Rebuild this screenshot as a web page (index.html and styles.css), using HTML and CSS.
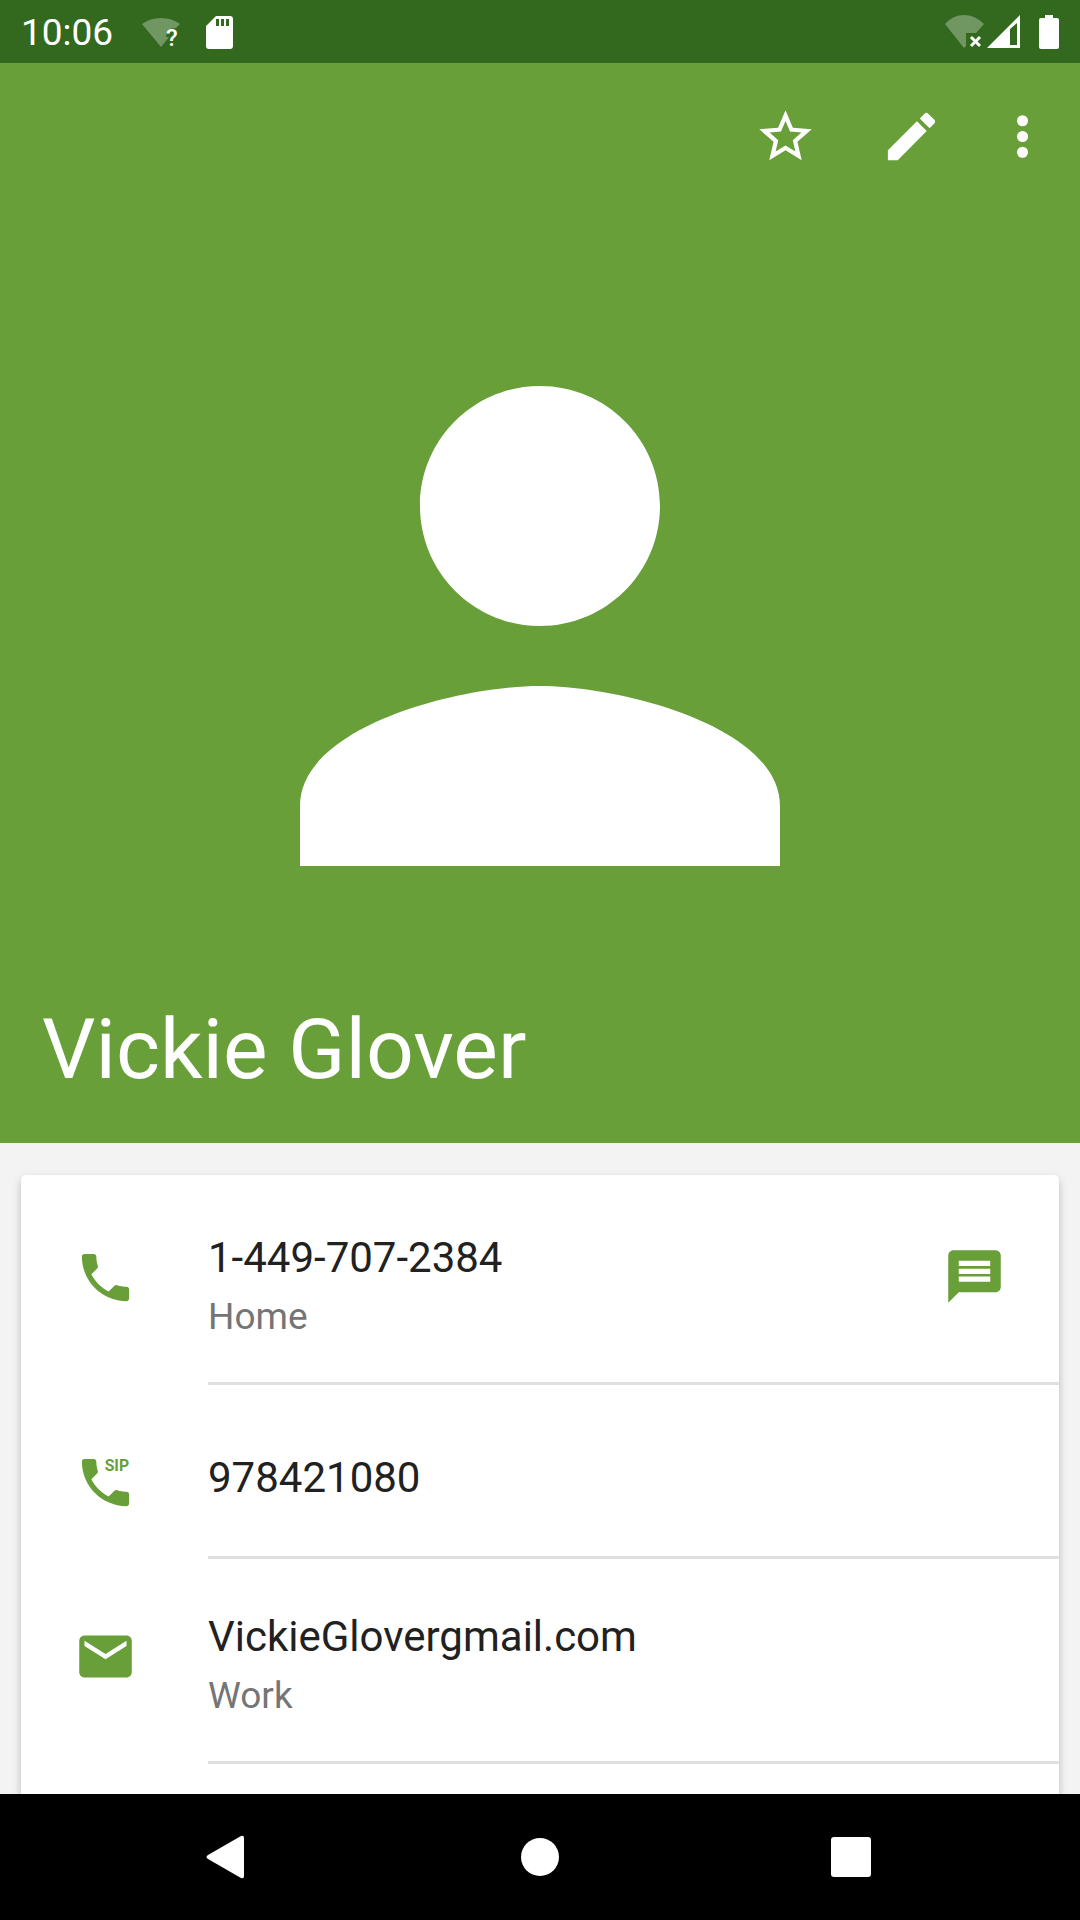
FILE: index.html
```html
<!DOCTYPE html>
<html lang="en">
<head>
  <meta charset="utf-8">
  <meta name="viewport" content="width=device-width, initial-scale=1">
  <title>Vickie Glover</title>
  <link rel="stylesheet" href="styles.css">
</head>
<body class="screen">
  <div class="status-bar">
    <span class="clock">10:06</span>
    <svg class="status-icon status-wifi" viewBox="0 0 40 39" aria-hidden="true">
      <path class="faded" d="M0 11Q8 5 19 5T38 11L34 15Q24 15 24 24H27L19 34Z"/>
      <text class="wifi-mark" x="24" y="33">?</text>
    </svg>
    <svg class="status-icon status-sd" viewBox="0 0 28 39" aria-hidden="true">
      <path fill-rule="evenodd" d="M10 3H24Q27 3 27 6V33Q27 36 24 36H3Q0 36 0 33V13ZM10 6V13H13V6ZM15 6V13H18V6ZM20 6V13H23V6Z"/>
    </svg>
    <div class="status-right">
      <svg class="status-icon status-wifi" viewBox="0 0 40 39" aria-hidden="true">
        <path class="faded" d="M0 11Q8 2 19 2T39 11L31 20H21V33L19 35Z"/>
        <path class="cross" d="M26 24L35 33M35 24L26 33"/>
      </svg>
      <svg class="status-icon status-signal" viewBox="0 0 34 39" aria-hidden="true">
        <path fill-rule="evenodd" d="M0 35L33 2V35ZM23 16V32H30V10Z"/>
      </svg>
      <svg class="status-icon status-battery" viewBox="0 0 20 39" aria-hidden="true">
        <path d="M6 2H14V5H18Q20 5 20 7V34Q20 36 18 36H2Q0 36 0 34V7Q0 5 2 5H6Z"/>
      </svg>
    </div>
  </div>

  <header class="hero">
    <div class="actions">
      <button class="icon-button" type="button" aria-label="Add to favorites">
        <svg class="icon" viewBox="0 0 24 24"><path d="M22 9.24l-7.19-.62L12 2 9.19 8.63 2 9.24l5.46 4.73L5.82 21 12 17.27 18.18 21l-1.63-7.03L22 9.24zM12 15.4l-3.76 2.27 1-4.28-3.32-2.88 4.38-.38L12 6.1l1.71 4.04 4.38.38-3.32 2.88 1 4.28L12 15.4z"/></svg>
      </button>
      <button class="icon-button edit" type="button" aria-label="Edit contact">
        <svg class="icon" viewBox="0 0 24 24"><path d="M3 17.25V21h3.75L17.81 9.94l-3.75-3.75L3 17.25zM20.71 7.04c.39-.39.39-1.02 0-1.41l-2.34-2.34c-.39-.39-1.02-.39-1.41 0l-1.83 1.83 3.75 3.75 1.83-1.83z"/></svg>
      </button>
      <button class="icon-button more" type="button" aria-label="More options">
        <svg class="icon" viewBox="0 0 24 24"><circle cx="12" cy="6" r="2.1"/><circle cx="12" cy="12" r="2.1"/><circle cx="12" cy="18" r="2.1"/></svg>
      </button>
    </div>
    <svg class="avatar" viewBox="4 4 16 16" aria-hidden="true">
      <path d="M12 12c2.21 0 4-1.79 4-4s-1.79-4-4-4-4 1.79-4 4 1.79 4 4 4zm0 2c-2.67 0-8 1.34-8 4v2h16v-2c0-2.66-5.33-4-8-4z"/>
    </svg>
    <h1 class="name">Vickie Glover</h1>
  </header>

  <main class="details">
    <ul class="card">
      <li class="row">
        <a class="entry" href="tel:1-449-707-2384">
          <svg class="icon entry-icon" viewBox="0 0 24 24" aria-hidden="true"><path d="M6.62 10.79c1.44 2.83 3.76 5.14 6.59 6.59l2.2-2.2c.27-.27.67-.36 1.02-.24 1.12.37 2.33.57 3.57.57.55 0 1 .45 1 1V20c0 .55-.45 1-1 1-9.39 0-17-7.61-17-17 0-.55.45-1 1-1h3.5c.55 0 1 .45 1 1 0 1.25.2 2.45.57 3.57.11.35.03.74-.25 1.02l-2.2 2.2z"/></svg>
          <span class="entry-text">
            <span class="value">1-449-707-2384</span>
            <span class="label">Home</span>
          </span>
        </a>
        <button class="icon-button message" type="button" aria-label="Send message">
          <svg class="icon" viewBox="0 0 24 24"><path d="M20 2H4c-1.1 0-1.99.9-1.99 2L2 22l4-4h14c1.1 0 2-.9 2-2V4c0-1.1-.9-2-2-2zM6 9h12v2H6V9zm12 5H6v-2h12v2zm0-6H6V6h12v2z"/></svg>
        </button>
      </li>
      <li class="row">
        <a class="entry" href="sip:978421080">
          <svg class="icon entry-icon" viewBox="0 0 24 24" aria-hidden="true"><path d="M6.62 10.79c1.44 2.83 3.76 5.14 6.59 6.59l2.2-2.2c.27-.27.67-.36 1.02-.24 1.12.37 2.33.57 3.57.57.55 0 1 .45 1 1V20c0 .55-.45 1-1 1-9.39 0-17-7.61-17-17 0-.55.45-1 1-1h3.5c.55 0 1 .45 1 1 0 1.25.2 2.45.57 3.57.11.35.03.74-.25 1.02l-2.2 2.2z"/><text class="sip-mark" x="21" y="7.6">SIP</text></svg>
          <span class="entry-text single">
            <span class="value">978421080</span>
          </span>
        </a>
      </li>
      <li class="row">
        <a class="entry" href="mailto:VickieGlovergmail.com">
          <svg class="icon entry-icon" viewBox="0 0 24 24" aria-hidden="true"><path d="M20 4H4c-1.1 0-1.99.9-1.99 2L2 18c0 1.1.9 2 2 2h16c1.1 0 2-.9 2-2V6c0-1.1-.9-2-2-2zm0 4l-8 5-8-5V6l8 5 8-5v2z"/></svg>
          <span class="entry-text">
            <span class="value">VickieGlovergmail.com</span>
            <span class="label">Work</span>
          </span>
        </a>
      </li>
    </ul>
  </main>

  <nav class="nav-bar" aria-label="System">
    <button class="nav-button" type="button" aria-label="Back">
      <svg class="nav-icon" viewBox="0 0 46 46"><path d="M2 21L35 2Q38 1 38 4V42Q38 45 35 44L2 25Q-1 23 2 21Z"/></svg>
    </button>
    <button class="nav-button" type="button" aria-label="Home">
      <svg class="nav-icon" viewBox="0 0 46 46"><circle cx="23" cy="23" r="19"/></svg>
    </button>
    <button class="nav-button" type="button" aria-label="Recent apps">
      <svg class="nav-icon" viewBox="0 0 46 46"><rect x="3" y="3" width="40" height="40" rx="3"/></svg>
    </button>
  </nav>
</body>
</html>
```
FILE: styles.css
```css
* {
  box-sizing: border-box;
}

.screen {
  display: flex;
  flex-direction: column;
  min-height: 100vh;
  margin: 0;
  background: #f3f3f3;
  color: #212121;
  font-family: Roboto, sans-serif;
}

svg {
  display: block;
  flex: none;
  fill: currentColor;
}

/* Status bar */

.status-bar {
  display: flex;
  align-items: center;
  height: 63px;
  padding: 2px 21px 0;
  background: #33691e;
  color: #fff;
}

.clock {
  font-size: 37px;
  line-height: 44px;
}

.status-icon {
  height: 39px;
}

.status-wifi {
  width: 40px;
}

.status-bar > .status-wifi {
  margin-left: 29px;
}

.status-sd {
  width: 28px;
  margin-left: 24px;
}

.status-right {
  display: flex;
  margin-left: auto;
}

.status-signal {
  width: 34px;
  margin: 0 18px 0 2px;
}

.status-battery {
  width: 20px;
}

.faded {
  opacity: 0.3;
}

.cross {
  fill: none;
  stroke: currentColor;
  stroke-width: 3px;
}

.wifi-mark {
  font-size: 24px;
  font-weight: 500;
}

/* Contact header */

.hero {
  display: flex;
  flex-direction: column;
  align-items: center;
  aspect-ratio: 1;
  padding-bottom: 41px;
  background: #689f38;
  color: #fff;
}

.actions {
  display: flex;
  align-self: stretch;
  justify-content: flex-end;
  padding: 42px 26px 0;
}

.icon-button {
  display: block;
  margin: 0;
  padding: 0;
  border: 0;
  background: none;
  color: inherit;
}

.edit {
  margin-left: 63px;
}

.more {
  margin-left: 48px;
}

.icon {
  width: 63px;
  height: 63px;
}

.avatar {
  width: 44.444%;
  margin: auto auto 132px;
}

.name {
  align-self: stretch;
  margin: 0;
  padding: 0 42px;
  font-size: 84px;
  font-weight: 400;
  line-height: 104px;
}

/* Contact details */

.details {
  display: flex;
  flex: 1;
  flex-direction: column;
  padding: 32px 21px 0;
}

.card {
  flex: 1;
  margin: 0;
  padding: 5px 0 30px;
  border-radius: 5px 5px 0 0;
  background: #fff;
  box-shadow: 0 4px 8px rgba(0, 0, 0, 0.24);
  list-style: none;
}

.row {
  display: flex;
  align-items: flex-start;
  border-bottom: 3px solid;
  border-image: linear-gradient(to right, transparent 187px, #e0e0e0 187px) 0 0 3 0;
}

.entry {
  display: flex;
  flex: 1;
  align-items: flex-start;
  padding-left: 53px;
  color: inherit;
  text-decoration: none;
}

.entry-icon {
  margin-top: 66px;
  color: #689f38;
}

.entry-text {
  display: flex;
  flex-direction: column;
  gap: 13px;
  padding: 53px 0 44px 71px;
}

.single {
  padding-top: 68px;
  padding-bottom: 54px;
}

.value {
  font-size: 42px;
  line-height: 49px;
}

.label {
  color: #757575;
  font-size: 37px;
  line-height: 43px;
}

.message {
  margin: 65px 53px 0 0;
  color: #689f38;
}

.sip-mark {
  font-size: 6px;
  font-weight: 700;
  text-anchor: end;
}

/* System navigation */

.nav-bar {
  position: sticky;
  bottom: 0;
  display: grid;
  grid-template-columns: repeat(3, 1fr);
  height: 126px;
  padding: 0 73px;
  background: #000;
  color: #fff;
}

.nav-button {
  display: grid;
  place-items: center;
  padding: 0;
  border: 0;
  background: none;
  color: inherit;
}

.nav-icon {
  width: 46px;
  height: 46px;
}
```
